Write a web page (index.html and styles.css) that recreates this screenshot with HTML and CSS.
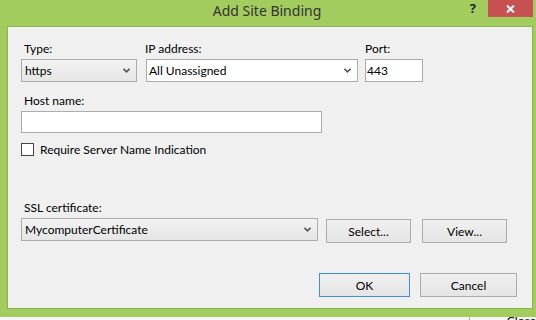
FILE: index.html
```html
<!DOCTYPE html>
<html lang="en">
<head>
  <meta charset="UTF-8">
  <title>Add Site Binding</title>
  <link rel="stylesheet" href="styles.css">
</head>
<body>
  <div class="window">
    <div class="titlebar">
      <div class="title">Add Site Binding</div>
      <div class="controls">
        <div class="help">?</div>
        <div class="close-btn">
          <svg width="9" height="8" viewBox="0 0 9 8"><path d="M1 0.5 L8 7.5 M8 0.5 L1 7.5" stroke="#fff" stroke-width="2"/></svg>
        </div>
      </div>
    </div>

    <div class="content">
      <div class="row">
        <div class="field type-field">
          <label class="lbl indent">Type:</label>
          <div class="box select gray">https
            <svg class="arrow" width="7" height="5" viewBox="0 0 7 5"><path d="M0.5 0.8 L3.5 3.8 L6.5 0.8" fill="none" stroke="#555" stroke-width="1.6"/></svg>
          </div>
        </div>
        <div class="field ip-field">
          <label class="lbl nudge">IP address:</label>
          <div class="box select white">All Unassigned
            <svg class="arrow" width="7" height="5" viewBox="0 0 7 5"><path d="M0.5 0.8 L3.5 3.8 L6.5 0.8" fill="none" stroke="#555" stroke-width="1.6"/></svg>
          </div>
        </div>
        <div class="field port-field">
          <label class="lbl">Port:</label>
          <div class="box white text-in">443</div>
        </div>
      </div>

      <div class="field host-field">
        <label class="lbl indent">Host name:</label>
        <div class="box white host-box"></div>
      </div>

      <div class="check-row">
        <span class="checkbox"></span>
        <span>Require Server Name Indication</span>
      </div>

      <div class="field ssl-field">
        <label class="lbl indent">SSL certificate:</label>
        <div class="ssl-row">
          <div class="box select gray ssl-box">MycomputerCertificate
            <svg class="arrow" width="7" height="5" viewBox="0 0 7 5"><path d="M0.5 0.8 L3.5 3.8 L6.5 0.8" fill="none" stroke="#555" stroke-width="1.6"/></svg>
          </div>
          <button class="btn select-btn">Select...</button>
          <button class="btn view-btn">View...</button>
        </div>
      </div>

      <div class="actions">
        <button class="btn ok-btn">OK</button>
        <button class="btn cancel-btn">Cancel</button>
      </div>
    </div>
  </div>

  <div class="under">
    <div class="under-cell"></div>
    <div class="under-text">Close</div>
  </div>
</body>
</html>
```

FILE: styles.css
```css
body {
  margin: 0;
  background-color: #f6f6f6;
  font-family: Lato, "Noto Sans", sans-serif;
  font-size: 12px;
  color: #000;
  overflow: hidden;
}
.window {
  width: 536px;
  box-sizing: border-box;
  background-color: #a3cc5e;
  padding: 0 3px 8px 7px;
}
.titlebar {
  height: 26px;
  display: grid;
  grid-template-columns: 1fr auto 1fr;
}
.title {
  grid-column: 2;
  font-family: "Noto Sans", sans-serif;
  font-size: 14px;
  line-height: 22px;
  color: #333;
  margin-right: 6px;
}
.controls {
  grid-column: 3;
  display: flex;
  justify-content: flex-end;
  align-items: flex-start;
}
.help {
  font-family: "Noto Sans", sans-serif;
  font-weight: bold;
  font-size: 13px;
  line-height: 16px;
  color: #222;
  margin-right: 12px;
}
.close-btn {
  width: 45px;
  height: 17px;
  background-color: #c75050;
  display: flex;
  align-items: center;
  justify-content: center;
}
.content {
  height: 283px;
  box-sizing: border-box;
  background-color: #f0f0f0;
  border: 1px solid #8ab64f;
  padding: 14px 15px 0 13px;
}
.row {
  display: flex;
}
.lbl {
  display: block;
  line-height: 16px;
  height: 16px;
  margin-bottom: 2px;
}
.lbl.indent {
  padding-left: 3px;
}
.lbl.nudge {
  margin-left: -1px;
}
.box {
  box-sizing: border-box;
  height: 23px;
  border: 1px solid #acacac;
  display: flex;
  align-items: center;
  padding-left: 2px;
}
.white {
  background-color: #fff;
}
.gray {
  background: linear-gradient(#f3f3f3, #e5e5e5);
}
.arrow {
  margin-left: auto;
  margin-right: 6px;
}
.type-field {
  width: 116px;
  margin-right: 9px;
}
.type-field .box {
  padding-left: 3px;
}
.ip-field {
  width: 212px;
  margin-right: 7px;
}
.port-field {
  width: 58px;
}
.text-in {
  padding-left: 1px;
}
.host-field {
  margin-top: 11px;
}
.host-box {
  width: 301px;
  height: 22px;
}
.check-row {
  margin-top: 10px;
  display: flex;
  align-items: center;
  height: 13px;
  gap: 6px;
}
.checkbox {
  width: 13px;
  height: 13px;
  box-sizing: border-box;
  border: 1px solid #444;
  background-color: #fff;
}
.ssl-field {
  margin-top: 44px;
}
.ssl-row {
  display: flex;
  align-items: flex-start;
}
.ssl-box {
  width: 297px;
  padding-left: 3px;
  margin-right: 8px;
}
.btn {
  box-sizing: border-box;
  height: 24px;
  border: 1px solid #acacac;
  background: linear-gradient(#f0f0f0, #e5e5e5);
  font-family: inherit;
  font-size: inherit;
  color: #000;
  padding: 0;
}
.select-btn {
  width: 85px;
  margin-top: 1px;
  margin-right: 11px;
}
.view-btn {
  width: 85px;
  margin-top: 1px;
}
.actions {
  margin-top: 30px;
  display: flex;
  justify-content: flex-end;
  gap: 10px;
}
.ok-btn {
  width: 91px;
  border-color: #3d8ee6;
}
.cancel-btn {
  width: 97px;
}
.under {
  display: flex;
  height: 3px;
  overflow: hidden;
  background-color: #f7f7f7;
}
.under-cell {
  width: 473px;
  border-right: 1px solid #b0b0b0;
}
.under-text {
  padding-left: 37px;
  line-height: 12px;
  margin-top: -2px;
}
```
